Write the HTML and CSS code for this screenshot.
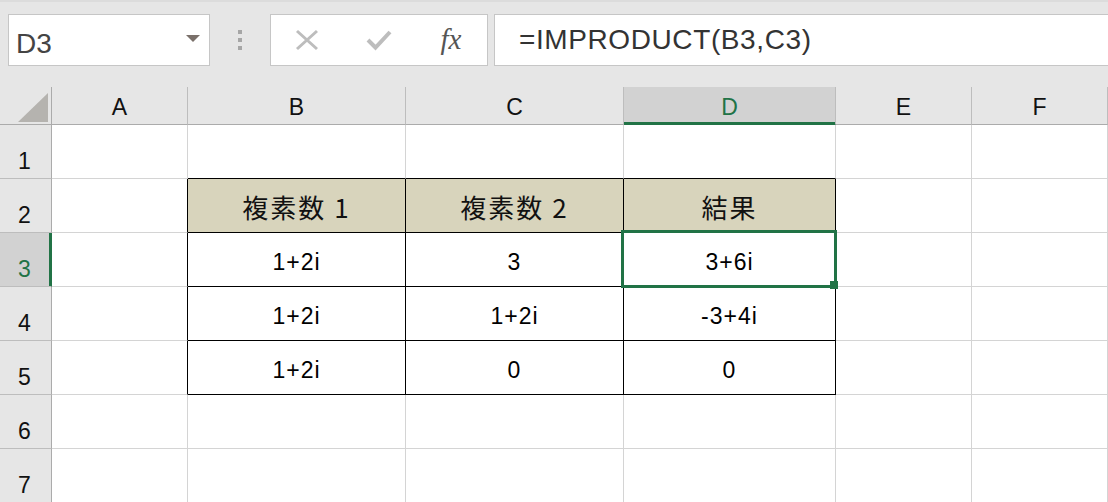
FILE: index.html
```html
<!DOCTYPE html>
<html>
<head>
  <meta charset="UTF-8" />
  <title>IMPRODUCT</title>
  <meta name="viewport" content="width=device-width, initial-scale=1" />
  <link rel="stylesheet" href="styles.css">
</head>
<body>
  <div class="toolbar">
    <div class="name-box">
      <span class="name-text">D3</span>
      <span class="name-arrow"></span>
    </div>
    <div class="grip"><i></i><i></i><i></i></div>
    <div class="fn-box">
      <span class="fn-icon">
        <svg width="24" height="22" viewBox="0 0 24 22"><path d="M2 2 L22 20 M22 2 L2 20" stroke="#bdbdbd" stroke-width="3" fill="none"/></svg>
      </span>
      <span class="fn-icon">
        <svg width="26" height="22" viewBox="0 0 26 22"><path d="M2 11 L9.5 18.5 L24 3" stroke="#bdbdbd" stroke-width="4" fill="none"/></svg>
      </span>
      <span class="fn-icon fx">fx</span>
    </div>
    <div class="formula">=IMPRODUCT(B3,C3)</div>
  </div>

  <div class="sheet">
    <!-- column headers -->
    <div class="cell corner">
      <svg width="30" height="29" viewBox="0 0 30 29"><polygon points="30,0 30,29 0,29" fill="#b5b3af"/></svg>
    </div>
    <div class="cell col-head">A</div>
    <div class="cell col-head">B</div>
    <div class="cell col-head">C</div>
    <div class="cell col-head sel">D</div>
    <div class="cell col-head">E</div>
    <div class="cell col-head">F</div>

    <!-- row 1 -->
    <div class="cell row-head">1</div>
    <div class="cell"></div>
    <div class="cell top-edge"></div>
    <div class="cell top-edge"></div>
    <div class="cell top-edge"></div>
    <div class="cell"></div>
    <div class="cell"></div>

    <!-- row 2 -->
    <div class="cell row-head">2</div>
    <div class="cell left-edge"></div>
    <div class="cell tbl th">複素数 1</div>
    <div class="cell tbl th">複素数 2</div>
    <div class="cell tbl th">結果</div>
    <div class="cell"></div>
    <div class="cell"></div>

    <!-- row 3 -->
    <div class="cell row-head sel">3</div>
    <div class="cell left-edge"></div>
    <div class="cell tbl">1+2i</div>
    <div class="cell tbl">3</div>
    <div class="cell tbl active">3+6i<span class="handle"></span></div>
    <div class="cell"></div>
    <div class="cell"></div>

    <!-- row 4 -->
    <div class="cell row-head">4</div>
    <div class="cell left-edge"></div>
    <div class="cell tbl">1+2i</div>
    <div class="cell tbl">1+2i</div>
    <div class="cell tbl">-3+4i</div>
    <div class="cell"></div>
    <div class="cell"></div>

    <!-- row 5 -->
    <div class="cell row-head">5</div>
    <div class="cell left-edge"></div>
    <div class="cell tbl">1+2i</div>
    <div class="cell tbl">0</div>
    <div class="cell tbl">0</div>
    <div class="cell"></div>
    <div class="cell"></div>

    <!-- row 6 -->
    <div class="cell row-head">6</div>
    <div class="cell"></div>
    <div class="cell"></div>
    <div class="cell"></div>
    <div class="cell"></div>
    <div class="cell"></div>
    <div class="cell"></div>

    <!-- row 7 -->
    <div class="cell row-head">7</div>
    <div class="cell"></div>
    <div class="cell"></div>
    <div class="cell"></div>
    <div class="cell"></div>
    <div class="cell"></div>
    <div class="cell"></div>
  </div>
</body>
</html>
```

FILE: styles.css
```css
body {
  margin: 0;
  width: 1108px;
  height: 502px;
  overflow: hidden;
  background-color: #fff;
  font-family: "Liberation Sans", Arial, sans-serif;
}

/* formula bar */
.toolbar {
  display: flex;
  align-items: flex-start;
  height: 87px;
  box-sizing: border-box;
  padding: 12px 0 0 8px;
  background-color: #e6e6e6;
  border-top: 2px solid #dcdcdc;
}

.name-box {
  width: 202px;
  height: 52px;
  box-sizing: border-box;
  border: 1px solid #c6c6c6;
  background-color: #fff;
  display: flex;
  align-items: center;
  justify-content: space-between;
  padding: 0 9px 0 7px;
}

.name-text {
  font-size: 28px;
  line-height: 32px;
  color: #444;
  margin-top: 8px;
}

.name-arrow {
  width: 0;
  height: 0;
  border-left: 7px solid transparent;
  border-right: 7px solid transparent;
  border-top: 7px solid #7a706a;
  margin-top: -3px;
}

.grip {
  display: flex;
  flex-direction: column;
  gap: 4px;
  margin: 16px 28px 0 28px;
}

.grip i {
  display: block;
  width: 4px;
  height: 4px;
  background-color: #a6a6a6;
}

.fn-box {
  width: 218px;
  height: 52px;
  box-sizing: border-box;
  border: 1px solid #c6c6c6;
  background-color: #fff;
  display: flex;
  align-items: center;
  justify-content: space-around;
}

.fn-icon {
  width: 30px;
  display: flex;
  justify-content: center;
  align-items: center;
}

.fx {
  font-family: "Liberation Serif", "Times New Roman", serif;
  font-style: italic;
  font-size: 29px;
  color: #555;
  margin-top: -1px;
}

.formula {
  flex: 1;
  height: 52px;
  box-sizing: border-box;
  margin-left: 6px;
  border: 1px solid #c6c6c6;
  border-right: none;
  background-color: #fff;
  padding-left: 24px;
  font-size: 28px;
  line-height: 50px;
  letter-spacing: 0.6px;
  color: #333;
}

/* grid */
.sheet {
  display: grid;
  grid-template-columns: 52px 136px 218px 218px 212px 136px 136px;
  grid-template-rows: 38px repeat(7, 54px);
}

.cell {
  box-sizing: border-box;
  border-right: 1px solid #d4d4d4;
  border-bottom: 1px solid #d4d4d4;
  display: flex;
  align-items: center;
  justify-content: center;
  padding-top: 6px;
  font-size: 23px;
  letter-spacing: 1px;
  color: #000;
}

.corner {
  background-color: #e6e6e6;
  border-right-color: #ababab;
  border-bottom-color: #ababab;
  align-items: flex-end;
  justify-content: flex-end;
  padding: 0 3px 2px 0;
}

.corner svg {
  display: block;
}

.col-head {
  background-color: #e6e6e6;
  border-right-color: #bdbdbd;
  border-bottom-color: #ababab;
  padding-top: 3px;
  letter-spacing: 0;
  color: #111;
}

.row-head {
  background-color: #e6e6e6;
  border-right-color: #ababab;
  border-bottom-color: #bdbdbd;
  align-items: flex-end;
  padding: 0 2px 3px 0;
  letter-spacing: 0;
  color: #111;
}

.col-head.sel {
  background-color: #d2d2d2;
  color: #217346;
  border-bottom-color: #217346;
  box-shadow: inset 0 -2px #217346;
}

.row-head.sel {
  background-color: #d2d2d2;
  color: #217346;
  border-right-color: #217346;
  box-shadow: inset -2px 0 #217346;
}

/* bordered table B2:D5 */
.tbl {
  border-right-color: #000;
  border-bottom-color: #000;
}

.top-edge {
  border-bottom-color: #000;
}

.left-edge {
  border-right-color: #000;
}

.th {
  background-color: #d8d4bc;
  font-family: "Noto Sans CJK JP", sans-serif;
  font-size: 26px;
  line-height: 26px;
  letter-spacing: 2px;
  padding-top: 3px;
  color: #111;
}

/* active cell */
.active {
  position: relative;
}

.active::after {
  content: "";
  position: absolute;
  left: -3px;
  top: -3px;
  right: -2px;
  bottom: -2px;
  border: 3px solid #217346;
}

.handle {
  position: absolute;
  right: -3px;
  bottom: -3px;
  width: 8px;
  height: 8px;
  background-color: #217346;
  z-index: 1;
}
```
